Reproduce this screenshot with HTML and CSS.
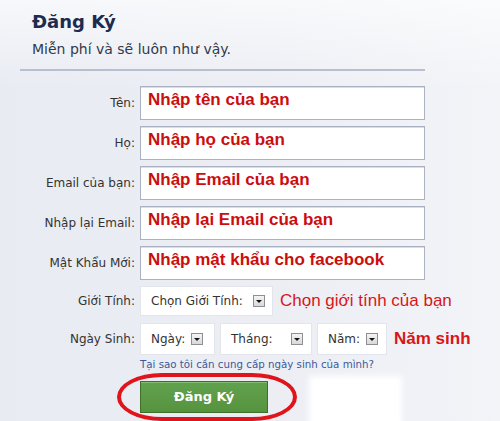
FILE: index.html
```html
<!DOCTYPE html>
<html lang="vi">
<head>
<meta charset="utf-8">
<title>Đăng Ký</title>
<link rel="stylesheet" href="styles.css">
</head>
<body>
<div class="page">
  <div class="header">
    <div class="title">Đăng Ký</div>
    <div class="subtitle">Miễn phí và sẽ luôn như vậy.</div>
  </div>
  <div class="form">
    <div class="row">
      <div class="label">Tên:</div>
      <div class="field">Nhập tên của bạn</div>
    </div>
    <div class="row">
      <div class="label">Họ:</div>
      <div class="field">Nhập họ của bạn</div>
    </div>
    <div class="row">
      <div class="label">Email của bạn:</div>
      <div class="field">Nhập Email của bạn</div>
    </div>
    <div class="row">
      <div class="label">Nhập lại Email:</div>
      <div class="field">Nhập lại Email của bạn</div>
    </div>
    <div class="row">
      <div class="label">Mật Khẩu Mới:</div>
      <div class="field">Nhập mật khẩu cho facebook</div>
    </div>
    <div class="row row-select">
      <div class="label">Giới Tính:</div>
      <div class="controls">
        <div class="select sel-gender"><span>Chọn Giới Tính:</span><span class="arrow"></span></div>
        <div class="hint hint-gender">Chọn giới tính của bạn</div>
      </div>
    </div>
    <div class="row row-birth">
      <div class="label">Ngày Sinh:</div>
      <div class="controls">
        <div class="select sel-day"><span>Ngày:</span><span class="arrow"></span></div>
        <div class="select sel-month"><span>Tháng:</span><span class="arrow"></span></div>
        <div class="select sel-year"><span>Năm:</span><span class="arrow"></span></div>
        <div class="hint hint-year">Năm sinh</div>
      </div>
    </div>
    <div class="row row-link">
      <div class="label"></div>
      <a class="why" href="#">Tại sao tôi cần cung cấp ngày sinh của mình?</a>
    </div>
    <div class="row row-button">
      <div class="label"></div>
      <div class="button-wrap">
        <div class="btn">Đăng Ký</div>
        <div class="circle"></div>
      </div>
      <div class="patch"></div>
    </div>
  </div>
</div>
</body>
</html>
```
FILE: styles.css
```css
html, body {
  margin: 0;
  padding: 0;
  width: 500px;
  height: 421px;
  overflow: hidden;
}
body {
  font-family: "DejaVu Sans", Verdana, sans-serif;
  color: #333;
}
.page {
  width: 500px;
  height: 421px;
  overflow: hidden;
  background:
    linear-gradient(to bottom, rgba(255,255,255,0.65) 0px, rgba(255,255,255,0) 90px),
    linear-gradient(to right, #e8ebf2 0%, #eceef4 55%, #f3f4f8 100%);
}
.header {
  margin-left: 20px;
  width: 393px;
  padding: 11px 0 11px 12px;
  border-bottom: 2px solid #b7bfd1;
}
.title {
  font-size: 18px;
  line-height: 21px;
  font-weight: bold;
  color: #1c2b50;
}
.subtitle {
  margin-top: 9px;
  font-size: 14px;
  line-height: 17px;
  color: #313a4c;
}
.form {
  margin-top: 15px;
  margin-left: 20px;
  display: flex;
  flex-direction: column;
  gap: 6px;
}
.row {
  display: flex;
  align-items: center;
  gap: 5px;
}
.label {
  width: 115px;
  flex: none;
  text-align: right;
  font-size: 12px;
  color: #333;
}
.field {
  box-sizing: border-box;
  width: 285px;
  height: 34px;
  background: #fff;
  border: 1px solid #a9b1c3;
  box-shadow: inset 0 1px 0 #d9dde6;
  padding: 3px 0 0 7px;
  font-family: "Liberation Sans", Arial, sans-serif;
  font-weight: bold;
  font-size: 17px;
  line-height: 20px;
  color: #cc0d0d;
}
.controls {
  display: flex;
  align-items: center;
  gap: 5px;
}
.select {
  box-sizing: border-box;
  display: flex;
  align-items: center;
  justify-content: space-between;
  background: #fff;
  border: 1px solid #e2e5ec;
  padding: 0 8px 0 10px;
  font-size: 12px;
  color: #333;
}
.sel-gender { width: 133px; height: 30px; padding-right: 7px; }
.sel-day { width: 75px; height: 32px; padding-right: 11px; }
.sel-month { width: 92px; height: 32px; }
.sel-year { width: 70px; height: 32px; }
.arrow {
  box-sizing: border-box;
  width: 12px;
  height: 12px;
  border: 1px solid #8d8f94;
  background: linear-gradient(#f4f4f4, #d8d8d8);
  position: relative;
}
.arrow::after {
  content: "";
  position: absolute;
  left: 2px;
  top: 4px;
  border-left: 3px solid transparent;
  border-right: 3px solid transparent;
  border-top: 3px solid #111;
}
.hint {
  font-family: "Liberation Sans", Arial, sans-serif;
  font-size: 17px;
  color: #d8161a;
}
.hint-gender { margin-left: 2px; }
.hint-year { font-weight: bold; margin-left: 2px; }
.row-birth { margin-top: 1px; }
.row-link { margin-top: -3px; }
.why {
  font-size: 10.25px;
  line-height: 12px;
  color: #3b5998;
  text-decoration: none;
}
.row-button {
  margin-top: 5px;
  align-items: flex-start;
}
.button-wrap {
  position: relative;
  width: 128px;
  height: 32px;
}
.btn {
  box-sizing: border-box;
  width: 128px;
  height: 32px;
  background: linear-gradient(#62a24d, #56933f);
  border: 1px solid #3e6f2b;
  box-shadow: inset 0 1px 0 #86bb72;
  color: #fff;
  font-weight: bold;
  font-size: 13px;
  line-height: 30px;
  text-align: center;
}
.circle {
  position: absolute;
  left: -23px;
  top: -8px;
  width: 180px;
  height: 48px;
  box-sizing: border-box;
  border: 4px solid #e0141b;
  border-radius: 45px / 24px;
}
.patch {
  margin-left: 40px;
  margin-top: -1px;
  width: 85px;
  height: 45px;
  background: #fff;
  box-shadow: 0 0 6px 4px #fff;
}
```
